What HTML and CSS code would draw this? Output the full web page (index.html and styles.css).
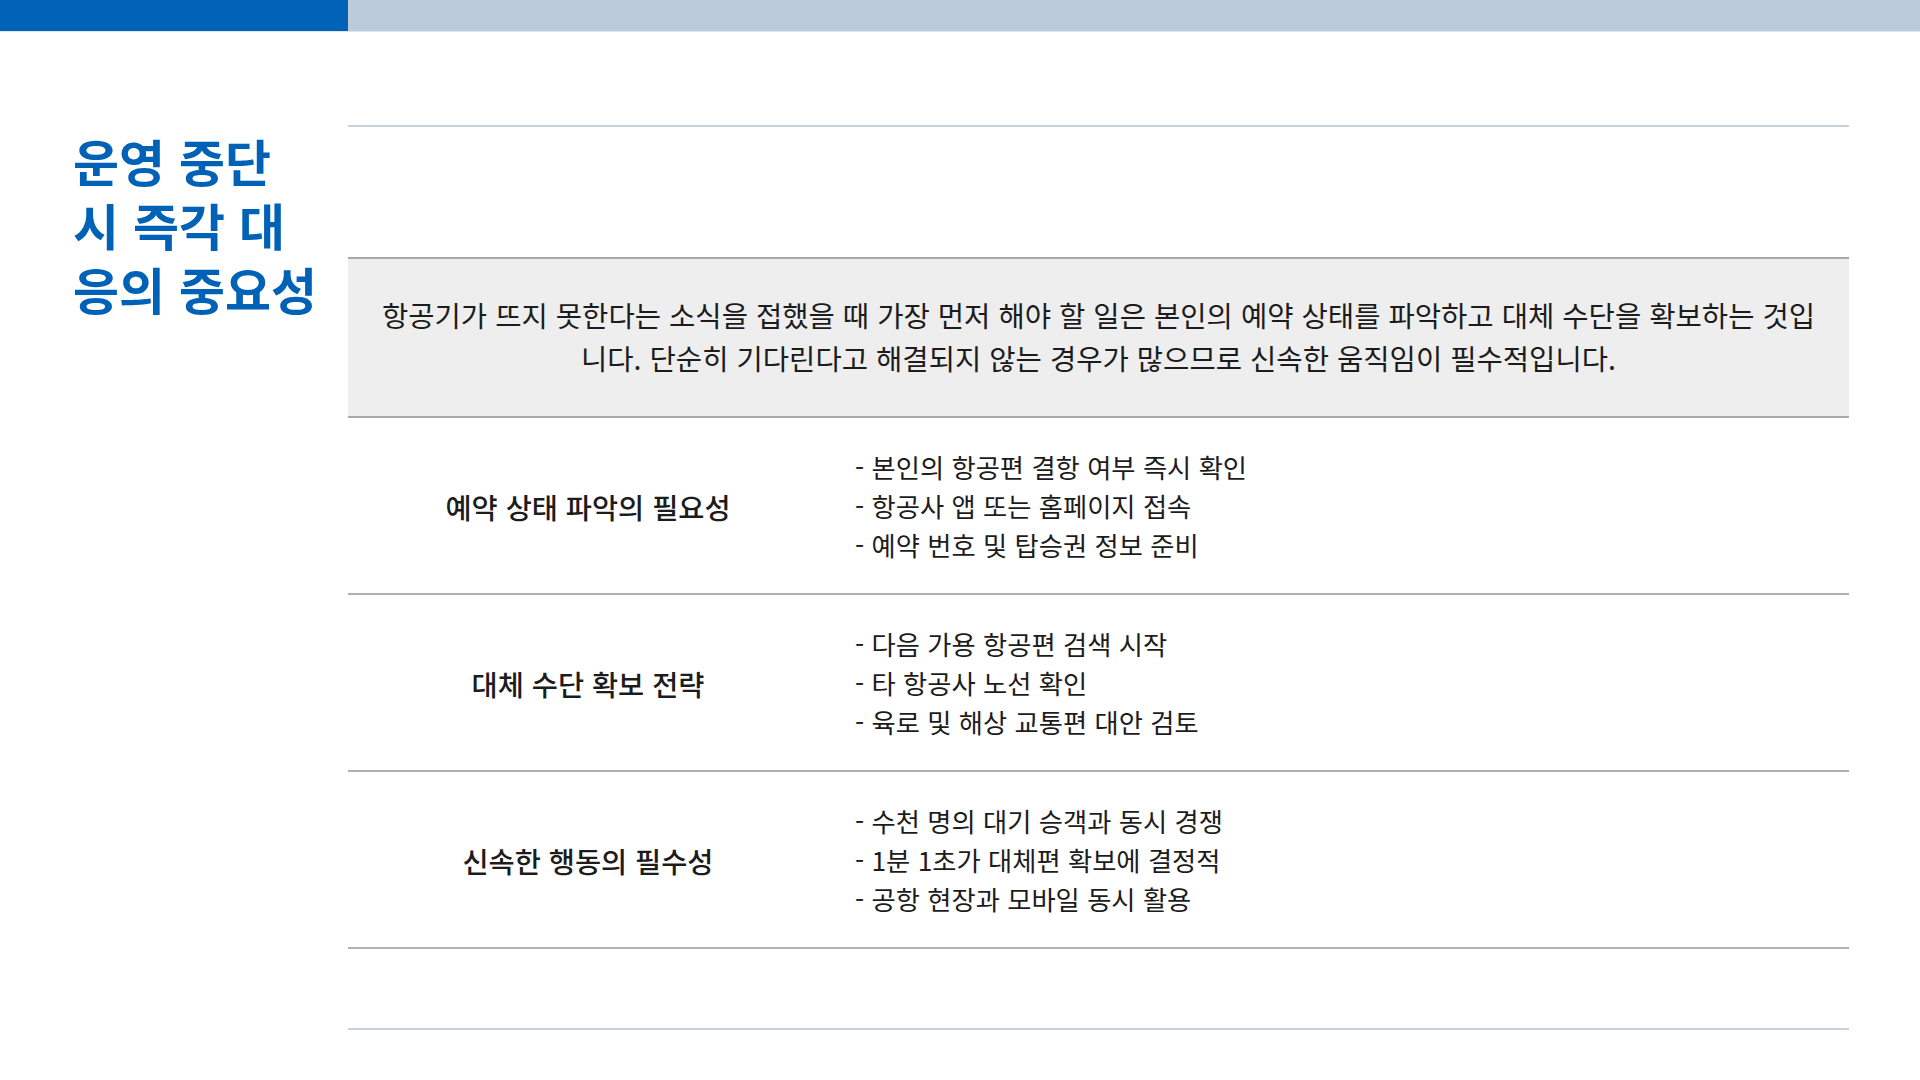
FILE: index.html
```html
<!DOCTYPE html>
<html lang="ko">
<head>
<meta charset="utf-8">
<title>운영 중단 시 즉각 대응의 중요성</title>
<link rel="stylesheet" href="styles.css">
</head>
<body>
<div class="topbar">
  <div class="topbar-accent"></div>
  <div class="topbar-rest"></div>
</div>
<div class="slide">
  <aside class="side">
    <h1 class="title"><span class="title-line">운영 중단</span><span class="title-line">시 즉각 대</span><span class="title-line">응의 중요성</span></h1>
  </aside>
  <section class="content">
    <div class="head-space"></div>
    <div class="summary">
      <p>항공기가 뜨지 못한다는 소식을 접했을 때 가장 먼저 해야 할 일은 본인의 예약 상태를 파악하고 대체 수단을 확보하는 것입니다. 단순히 기다린다고 해결되지 않는 경우가 많으므로 신속한 움직임이 필수적입니다.</p>
    </div>
    <div class="row">
      <div class="label">예약 상태 파악의 필요성</div>
      <ul class="points">
        <li>- 본인의 항공편 결항 여부 즉시 확인</li>
        <li>- 항공사 앱 또는 홈페이지 접속</li>
        <li>- 예약 번호 및 탑승권 정보 준비</li>
      </ul>
    </div>
    <div class="row">
      <div class="label">대체 수단 확보 전략</div>
      <ul class="points">
        <li>- 다음 가용 항공편 검색 시작</li>
        <li>- 타 항공사 노선 확인</li>
        <li>- 육로 및 해상 교통편 대안 검토</li>
      </ul>
    </div>
    <div class="row">
      <div class="label">신속한 행동의 필수성</div>
      <ul class="points">
        <li>- 수천 명의 대기 승객과 동시 경쟁</li>
        <li>- 1분 1초가 대체편 확보에 결정적</li>
        <li>- 공항 현장과 모바일 동시 활용</li>
      </ul>
    </div>
    <div class="foot-space"></div>
  </section>
</div>
</body>
</html>
```
FILE: styles.css
```css
* { box-sizing: border-box; }

html, body {
  margin: 0;
  padding: 0;
  background: #ffffff;
}

body {
  width: 1920px;
  height: 1080px;
  overflow: hidden;
  font-family: "Noto Sans CJK KR", "Noto Sans", sans-serif;
  color: #1c1c1c;
}

.topbar {
  display: flex;
  height: 32px;
  border-bottom: 1px solid #dfe6ee;
}

.topbar-accent {
  width: 348px;
  background: #0063b8;
}

.topbar-rest {
  flex: 1;
  background: #bccbda;
}

.slide {
  display: flex;
}

.side {
  width: 348px;
  flex: none;
  padding: 96px 0 0 73px;
}

.title {
  margin: 0;
  font-size: 50px;
  line-height: 64px;
  font-weight: 700;
  color: #0062b6;
}

.title-line {
  display: block;
  height: 64px;
}

.content {
  width: 1501px;
  margin-top: 93px;
  border-top: 2px solid #c7d2de;
}

.head-space {
  height: 130px;
}

.summary {
  background: #eeeeee;
  border-top: 2px solid #a9a9a9;
  border-bottom: 2px solid #a9a9a9;
  padding: 34px 30px 37px;
}

.summary p {
  margin: 0;
  text-align: center;
  font-size: 28.6px;
  line-height: 43px;
  font-weight: 400;
}

.row {
  display: grid;
  grid-template-columns: 480px 1fr;
  align-items: center;
  height: 177px;
  border-bottom: 2px solid #b0b0b0;
}

.label {
  text-align: center;
  font-size: 28.4px;
  font-weight: 500;
  line-height: 40px;
  padding-top: 3px;
}

.points {
  list-style: none;
  margin: 0;
  padding: 0 0 0 27px;
  font-size: 26.3px;
  line-height: 39px;
  font-weight: 400;
}

.foot-space {
  height: 81px;
  border-bottom: 2px solid #c7d2de;
}
```
